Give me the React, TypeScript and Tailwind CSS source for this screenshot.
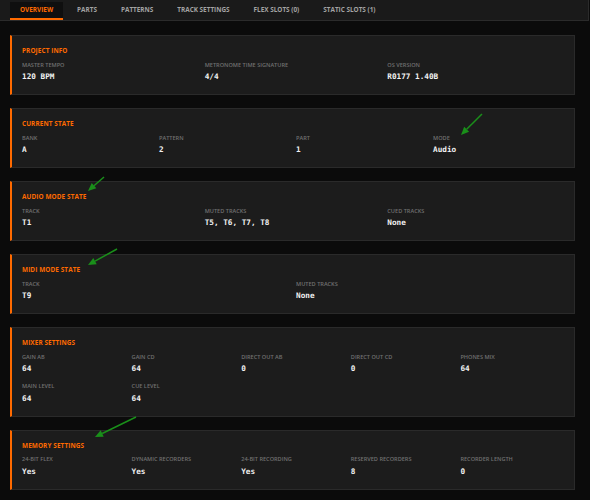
const tabs = ["Overview", "Parts", "Patterns", "Track Settings", "Flex Slots (0)", "Static Slots (1)"];

type Field = { label: string; value: string };
type Section = { title: string; cols: string; fields: Field[] };

const sections: Section[] = [
  {
    title: "Project Info",
    cols: "grid-cols-3",
    fields: [
      { label: "Master Tempo", value: "120 BPM" },
      { label: "Metronome Time Signature", value: "4/4" },
      { label: "OS Version", value: "R0177 1.40B" },
    ],
  },
  {
    title: "Current State",
    cols: "grid-cols-4",
    fields: [
      { label: "Bank", value: "A" },
      { label: "Pattern", value: "2" },
      { label: "Part", value: "1" },
      { label: "Mode", value: "Audio" },
    ],
  },
  {
    title: "Audio Mode State",
    cols: "grid-cols-3",
    fields: [
      { label: "Track", value: "T1" },
      { label: "Muted Tracks", value: "T5, T6, T7, T8" },
      { label: "Cued Tracks", value: "None" },
    ],
  },
  {
    title: "MIDI Mode State",
    cols: "grid-cols-2",
    fields: [
      { label: "Track", value: "T9" },
      { label: "Muted Tracks", value: "None" },
    ],
  },
  {
    title: "Mixer Settings",
    cols: "grid-cols-5",
    fields: [
      { label: "Gain AB", value: "64" },
      { label: "Gain CD", value: "64" },
      { label: "Direct Out AB", value: "0" },
      { label: "Direct Out CD", value: "0" },
      { label: "Phones Mix", value: "64" },
      { label: "Main Level", value: "64" },
      { label: "Cue Level", value: "64" },
    ],
  },
  {
    title: "Memory Settings",
    cols: "grid-cols-5",
    fields: [
      { label: "24-Bit Flex", value: "Yes" },
      { label: "Dynamic Recorders", value: "Yes" },
      { label: "24-Bit Recording", value: "Yes" },
      { label: "Reserved Recorders", value: "8" },
      { label: "Recorder Length", value: "0" },
    ],
  },
];

// green annotation arrows: [x1, y1, tipX, tipY]
const arrows = [
  [482, 114, 461, 135],
  [104, 177, 88, 191],
  [117, 249, 88, 265],
  [136, 417, 95, 437],
];

function Arrow({ a }: { a: number[] }) {
  const [x1, y1, x2, y2] = a;
  const ang = Math.atan2(y2 - y1, x2 - x1);
  const len = 8;
  const w = 3.5;
  const bx = x2 - len * Math.cos(ang);
  const by = y2 - len * Math.sin(ang);
  const px = -Math.sin(ang) * w;
  const py = Math.cos(ang) * w;
  return (
    <g>
      <line x1={x1} y1={y1} x2={bx} y2={by} stroke="#1a8f1a" strokeWidth="1.5" />
      <polygon points={`${x2},${y2} ${bx + px},${by + py} ${bx - px},${by - py}`} fill="#1a8f1a" />
    </g>
  );
}

export default function App() {
  return (
    <div className="relative w-[590px] h-[500px] overflow-hidden bg-[#0b0b0b]" style={{ fontFamily: '"Open Sans", "Liberation Sans", sans-serif' }}>
      <nav className="flex h-[21px] w-[589px] pl-[10px] bg-[#1a1a1a] border-b border-r border-[#2b2b2b]">
        {tabs.map((t, i) => (
          <div
            key={t}
            className={`flex items-center px-[10px] mr-[4px] text-[6.4px] font-bold uppercase ${
              i === 0 ? "mt-[2px] bg-[#0f0f0f] text-[#ff6a00] border-b-2 border-[#ff6a00]" : "text-[#a3a3a3]"
            }`}
          >
            {t}
          </div>
        ))}
      </nav>

      <main className="flex flex-col gap-[13px] pt-[14px] pl-[10px] pr-[15px]">
        {sections.map((s) => (
          <section
            key={s.title}
            className="bg-[#1c1c1c] border border-[#2a2a2a] border-l-2 border-l-[#ff6a00] px-[10px] pt-[10px] pb-[12px]"
          >
            <h2 className="text-[6.4px] leading-[9px] font-bold uppercase text-[#ff6a00] tracking-[0.1px]">{s.title}</h2>
            <div className={`grid ${s.cols} gap-x-[6px] gap-y-[9px] mt-[6.5px]`}>
              {s.fields.map((f) => (
                <div key={f.label}>
                  <div className="text-[5.6px] leading-[7px] font-semibold uppercase text-[#707070]">{f.label}</div>
                  <div
                    className="mt-[3.5px] text-[7.7px] leading-[10px] font-bold text-[#f2f2f2]"
                    style={{ fontFamily: '"DejaVu Sans Mono", "Liberation Mono", monospace' }}
                  >
                    {f.value}
                  </div>
                </div>
              ))}
            </div>
          </section>
        ))}
      </main>

      <svg className="absolute inset-0 pointer-events-none" width="590" height="500">
        {arrows.map((a, i) => (
          <Arrow key={i} a={a} />
        ))}
      </svg>
    </div>
  );
}
